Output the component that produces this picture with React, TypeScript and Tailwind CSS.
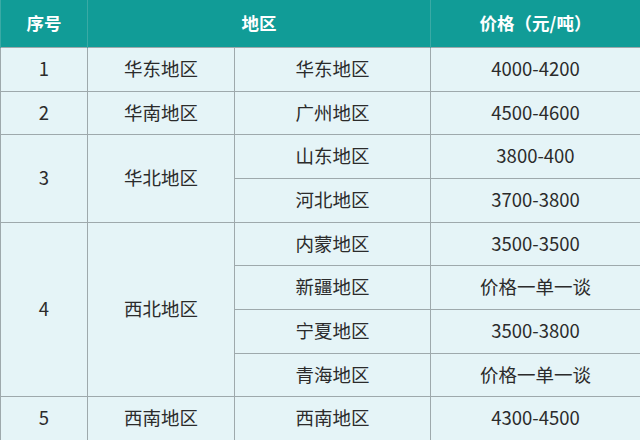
const rows: {no?: string; noSpan?: number; region?: string; regionSpan?: number; area: string; price: string; h: string}[] = [
  {no: "1", noSpan: 1, region: "华东地区", regionSpan: 1, area: "华东地区", price: "4000-4200", h: "h-[44px]"},
  {no: "2", noSpan: 1, region: "华南地区", regionSpan: 1, area: "广州地区", price: "4500-4600", h: "h-[43px]"},
  {no: "3", noSpan: 2, region: "华北地区", regionSpan: 2, area: "山东地区", price: "3800-400", h: "h-[44px]"},
  {area: "河北地区", price: "3700-3800", h: "h-[44px]"},
  {no: "4", noSpan: 4, region: "西北地区", regionSpan: 4, area: "内蒙地区", price: "3500-3500", h: "h-[43px]"},
  {area: "新疆地区", price: "价格一单一谈", h: "h-[44px]"},
  {area: "宁夏地区", price: "3500-3800", h: "h-[44px]"},
  {area: "青海地区", price: "价格一单一谈", h: "h-[43px]"},
  {no: "5", noSpan: 1, region: "西南地区", regionSpan: 1, area: "西南地区", price: "4300-4500", h: "h-[44px]"},
]

const cell = "border border-[#9ea9ac] text-center align-middle p-0"

export default function App() {
  return (
    <div className="w-[640px] h-[440px] overflow-hidden bg-[#e5f4f7] font-['Noto_Sans_CJK_SC','Noto_Sans',sans-serif] text-[#2b2b2b]">
      <table className="w-[640px] table-fixed border-collapse">
        <colgroup>
          <col className="w-[87px]" />
          <col className="w-[147px]" />
          <col className="w-[196px]" />
          <col className="w-[210px]" />
        </colgroup>
        <thead>
          <tr className="h-[47px] bg-[#119c97] text-white text-[17.5px] font-bold">
            <th className="border-x border-[#3aaaa5] text-center p-0">序号</th>
            <th colSpan={2} className="border-x border-[#3aaaa5] text-center p-0">地区</th>
            <th className="border-x border-[#3aaaa5] text-center p-0">价格（元/吨）</th>
          </tr>
        </thead>
        <tbody className="text-[18.5px] font-normal">
          {rows.map((r, i) => (
            <tr key={i} className={r.h}>
              {r.no && (
                <td rowSpan={r.noSpan} className={cell}>
                  {r.no}
                </td>
              )}
              {r.region && (
                <td rowSpan={r.regionSpan} className={cell}>
                  {r.region}
                </td>
              )}
              <td className={cell}>{r.area}</td>
              <td className={cell}>{r.price}</td>
            </tr>
          ))}
        </tbody>
      </table>
    </div>
  )
}
